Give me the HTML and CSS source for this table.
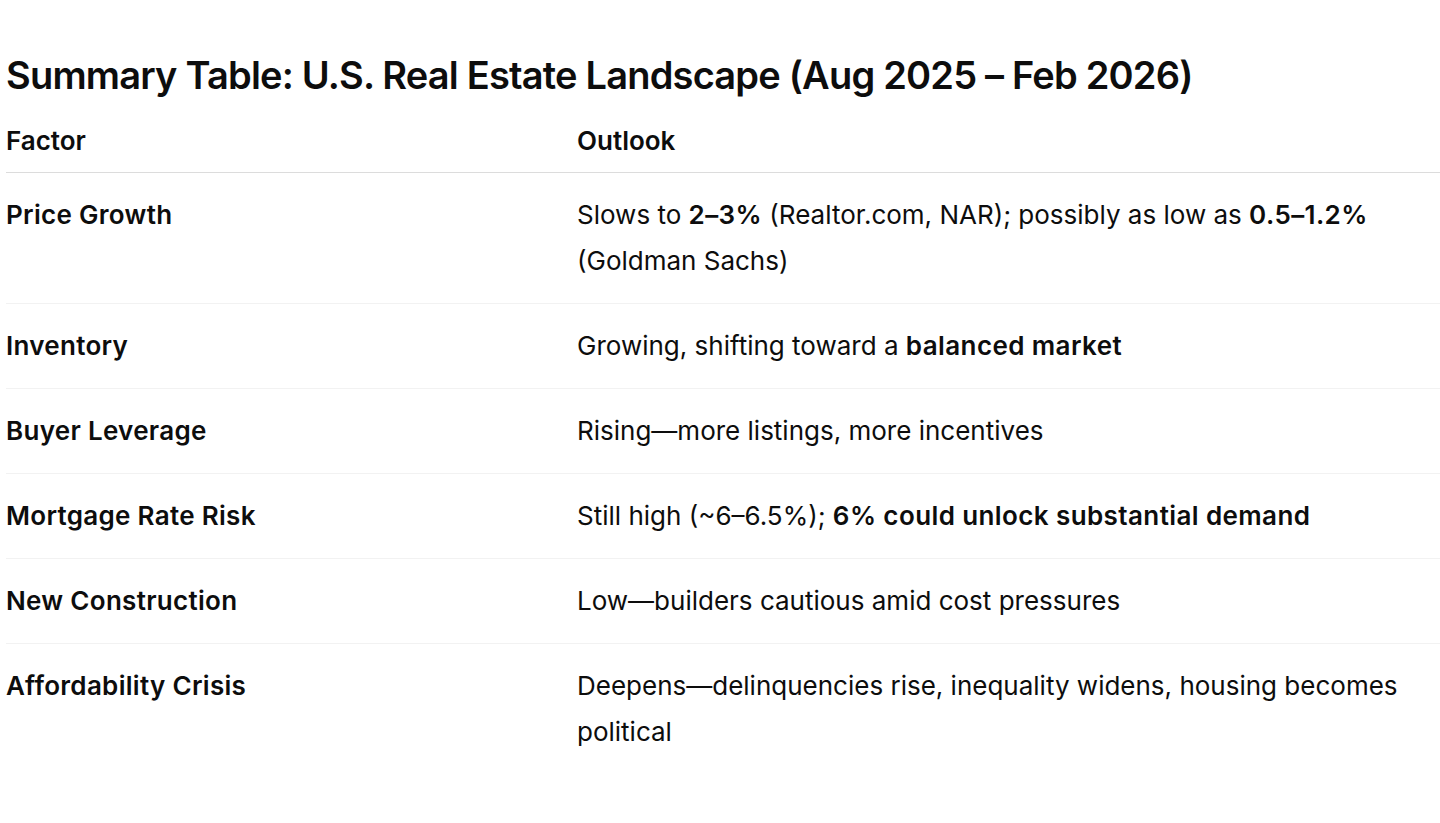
FILE: index.html
```html
<!DOCTYPE html>
<html lang="en">
<head>
<meta charset="utf-8">
<title>Summary Table</title>
<link rel="stylesheet" href="styles.css">
</head>
<body>
<main class="page">
  <h1 class="title">Summary Table: U.S. Real Estate Landscape (Aug 2025 – Feb 2026)</h1>
  <table class="summary">
    <thead>
      <tr><th class="col-factor">Factor</th><th>Outlook</th></tr>
    </thead>
    <tbody>
      <tr><td class="factor">Price Growth</td><td>Slows to <strong>2–3%</strong> (Realtor.com, NAR); possibly as low as <strong>0.5–1.2%</strong> (Goldman Sachs)</td></tr>
      <tr><td class="factor">Inventory</td><td>Growing, shifting toward a <strong>balanced market</strong></td></tr>
      <tr><td class="factor">Buyer Leverage</td><td>Rising—more listings, more incentives</td></tr>
      <tr><td class="factor">Mortgage Rate Risk</td><td>Still high (~6–6.5%); <strong>6% could unlock substantial demand</strong></td></tr>
      <tr><td class="factor">New Construction</td><td>Low—builders cautious amid cost pressures</td></tr>
      <tr><td class="factor">Affordability Crisis</td><td>Deepens—delinquencies rise, inequality widens, housing becomes political</td></tr>
    </tbody>
  </table>
</main>
</body>
</html>
```
FILE: styles.css
```css
html, body {
  margin: 0;
  padding: 0;
  background: #ffffff;
}
body {
  font-family: Inter, "Noto Sans", sans-serif;
  color: #0d0d0d;
}
.page {
  padding: 52px 0 0 6px;
}
.title {
  margin: 0 0 20px 0;
  font-size: 38px;
  line-height: 46px;
  font-weight: 600;
  letter-spacing: -0.8px;
}
.summary {
  width: 100%;
  border-collapse: collapse;
  font-size: 26px;
  line-height: 46px;
}
.summary th {
  text-align: left;
  font-weight: 600;
  padding: 0 0 8px 0;
  border-bottom: 1px solid #dcdcdc;
}
.summary th.col-factor {
  width: 571px;
}
.summary td {
  padding: 19px 0 19px 0;
  vertical-align: top;
  border-bottom: 1px solid #f2f2f2;
}
.summary tbody tr:last-child td {
  border-bottom: none;
}
.summary td.factor {
  font-weight: 600;
  letter-spacing: 0.3px;
}
.summary strong {
  font-weight: 600;
  letter-spacing: 0.4px;
}
```
